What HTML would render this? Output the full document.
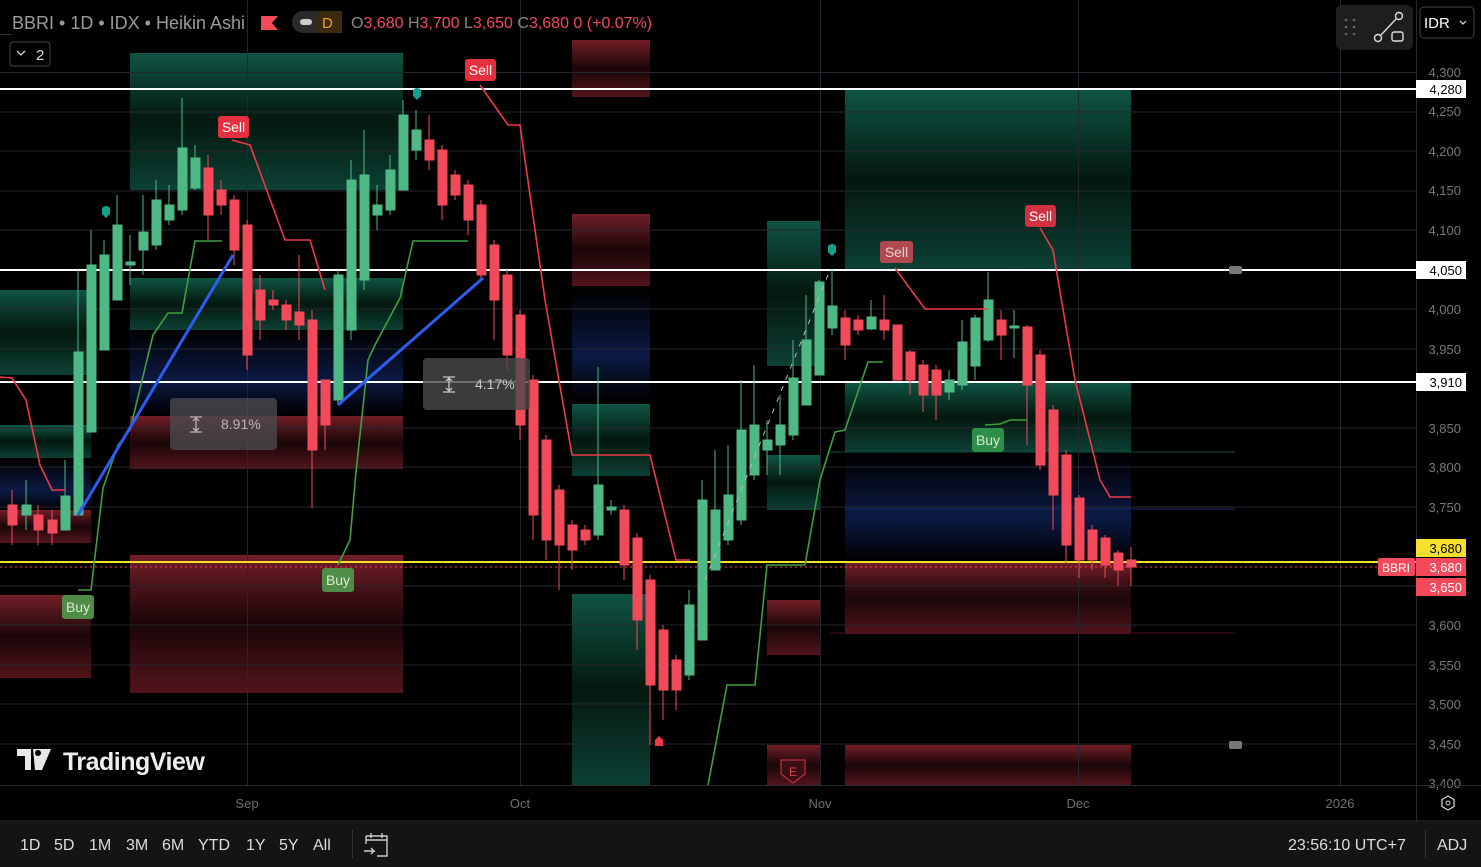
<!DOCTYPE html>
<html><head><meta charset="utf-8"><style>
html,body{margin:0;padding:0;background:#000;width:1481px;height:867px;overflow:hidden;font-family:"Liberation Sans",sans-serif}
</style></head><body>
<svg width="1481" height="867" style="position:absolute;left:0;top:0" xmlns="http://www.w3.org/2000/svg" font-family="Liberation Sans, sans-serif">
<defs>
<linearGradient id="gz" x1="0" y1="0" x2="0" y2="1"><stop offset="0" stop-color="#0f5444"/><stop offset="0.5" stop-color="#04180f"/><stop offset="1" stop-color="#0c4034"/></linearGradient>
<linearGradient id="rz" x1="0" y1="0" x2="0" y2="1"><stop offset="0" stop-color="#721e27"/><stop offset="0.5" stop-color="#1a0608"/><stop offset="1" stop-color="#52141b"/></linearGradient>
<linearGradient id="bz" x1="0" y1="0" x2="0" y2="1"><stop offset="0" stop-color="#000"/><stop offset="0.6" stop-color="#0c1a44"/><stop offset="1" stop-color="#000"/></linearGradient>
</defs>
<rect x="0" y="0" width="1481" height="867" fill="#000"/>
<rect x="130" y="53" width="273" height="137" fill="url(#gz)"/>
<rect x="130" y="278" width="273" height="52" fill="url(#gz)"/>
<rect x="130" y="330" width="273" height="85" fill="url(#bz)"/>
<rect x="130" y="416" width="273" height="53" fill="url(#rz)"/>
<rect x="130" y="555" width="273" height="138" fill="url(#rz)"/>
<rect x="0" y="290" width="91" height="85" fill="url(#gz)"/>
<rect x="0" y="425" width="91" height="33" fill="url(#gz)"/>
<rect x="0" y="460" width="91" height="50" fill="url(#bz)"/>
<rect x="0" y="510" width="91" height="33" fill="url(#rz)"/>
<rect x="0" y="595" width="91" height="83" fill="url(#rz)"/>
<rect x="572" y="40" width="78" height="57" fill="url(#rz)"/>
<rect x="572" y="214" width="78" height="72" fill="url(#rz)"/>
<rect x="572" y="290" width="78" height="110" fill="url(#bz)"/>
<rect x="572" y="404" width="78" height="72" fill="url(#gz)"/>
<rect x="572" y="594" width="78" height="191" fill="url(#gz)"/>
<rect x="767" y="221" width="53" height="145" fill="url(#gz)"/>
<rect x="767" y="455" width="53" height="55" fill="url(#gz)"/>
<rect x="767" y="600" width="53" height="55" fill="url(#rz)"/>
<rect x="845" y="90" width="286" height="180" fill="url(#gz)"/>
<rect x="845" y="382" width="286" height="70" fill="url(#gz)"/>
<rect x="845" y="455" width="286" height="105" fill="url(#bz)"/>
<rect x="845" y="562" width="286" height="72" fill="url(#rz)"/>
<rect x="845" y="745" width="286" height="40" fill="url(#rz)"/>
<rect x="767" y="745" width="53" height="40" fill="url(#rz)"/>
<line x1="830" y1="452" x2="1235" y2="452" stroke="#0b4a3c"/>
<line x1="830" y1="633" x2="1235" y2="633" stroke="#4a1218"/>
<line x1="845" y1="509" x2="1235" y2="509" stroke="#1a2c70"/>
<g stroke="#262630" stroke-width="1">
<line x1="0" y1="72.5" x2="1416" y2="72.5"/><line x1="0" y1="112" x2="1416" y2="112"/><line x1="0" y1="151" x2="1416" y2="151"/><line x1="0" y1="191" x2="1416" y2="191"/><line x1="0" y1="230" x2="1416" y2="230"/><line x1="0" y1="309" x2="1416" y2="309"/><line x1="0" y1="349" x2="1416" y2="349"/><line x1="0" y1="428" x2="1416" y2="428"/><line x1="0" y1="467" x2="1416" y2="467"/><line x1="0" y1="507" x2="1416" y2="507"/><line x1="0" y1="586" x2="1416" y2="586"/><line x1="0" y1="625" x2="1416" y2="625"/><line x1="0" y1="665" x2="1416" y2="665"/><line x1="0" y1="704" x2="1416" y2="704"/><line x1="0" y1="744" x2="1416" y2="744"/>
<line x1="247.5" y1="0" x2="247.5" y2="785"/><line x1="520.5" y1="0" x2="520.5" y2="785"/><line x1="820.5" y1="0" x2="820.5" y2="785"/><line x1="1078.5" y1="0" x2="1078.5" y2="785"/><line x1="1340.5" y1="0" x2="1340.5" y2="785"/>
</g>
<line x1="0" y1="89" x2="1416" y2="89" stroke="#fff" stroke-width="2"/>
<line x1="0" y1="270" x2="1416" y2="270" stroke="#fff" stroke-width="2"/>
<line x1="0" y1="382" x2="1416" y2="382" stroke="#fff" stroke-width="2"/>
<line x1="0" y1="562" x2="1416" y2="562" stroke="#f5e030" stroke-width="2"/>
<line x1="0" y1="567" x2="1416" y2="567" stroke="#f04050" stroke-width="1" stroke-dasharray="2 3"/>
<rect x="1229" y="266" width="13" height="8" rx="2" fill="#777"/>
<rect x="1229" y="741" width="13" height="8" rx="2" fill="#777"/>
<g fill="#f24a5a" stroke="#f24a5a" stroke-width="1">
<line x1="12" y1="490" x2="12" y2="545"/><rect x="8" y="505" width="9" height="20"/>
<line x1="38" y1="505" x2="38" y2="545"/><rect x="34" y="515" width="9" height="15"/>
<line x1="52" y1="510" x2="52" y2="545"/><rect x="48" y="520" width="9" height="13"/>
<line x1="208" y1="155" x2="208" y2="240"/><rect x="204" y="168" width="9" height="47"/>
<line x1="221" y1="180" x2="221" y2="215"/><rect x="217" y="190" width="9" height="15"/>
<line x1="234" y1="195" x2="234" y2="265"/><rect x="230" y="200" width="9" height="50"/>
<line x1="247" y1="220" x2="247" y2="370"/><rect x="243" y="225" width="9" height="130"/>
<line x1="260" y1="275" x2="260" y2="340"/><rect x="256" y="290" width="9" height="30"/>
<line x1="273" y1="290" x2="273" y2="310"/><rect x="269" y="300" width="9" height="5"/>
<line x1="286" y1="300" x2="286" y2="330"/><rect x="282" y="305" width="9" height="15"/>
<line x1="299" y1="255" x2="299" y2="340"/><rect x="295" y="312" width="9" height="13"/>
<line x1="312" y1="310" x2="312" y2="508"/><rect x="308" y="320" width="9" height="130"/>
<line x1="325" y1="380" x2="325" y2="450"/><rect x="321" y="380" width="9" height="45"/>
<line x1="429" y1="115" x2="429" y2="170"/><rect x="425" y="140" width="9" height="20"/>
<line x1="442" y1="145" x2="442" y2="220"/><rect x="438" y="150" width="9" height="55"/>
<line x1="455" y1="170" x2="455" y2="200"/><rect x="451" y="175" width="9" height="20"/>
<line x1="468" y1="180" x2="468" y2="235"/><rect x="464" y="185" width="9" height="35"/>
<line x1="481" y1="200" x2="481" y2="280"/><rect x="477" y="205" width="9" height="70"/>
<line x1="494" y1="240" x2="494" y2="340"/><rect x="490" y="245" width="9" height="55"/>
<line x1="507" y1="270" x2="507" y2="370"/><rect x="503" y="275" width="9" height="80"/>
<line x1="520" y1="310" x2="520" y2="440"/><rect x="516" y="315" width="9" height="110"/>
<line x1="533" y1="375" x2="533" y2="540"/><rect x="529" y="380" width="9" height="135"/>
<line x1="546" y1="435" x2="546" y2="560"/><rect x="542" y="440" width="9" height="100"/>
<line x1="559" y1="485" x2="559" y2="590"/><rect x="555" y="490" width="9" height="55"/>
<line x1="572" y1="520" x2="572" y2="570"/><rect x="568" y="525" width="9" height="25"/>
<line x1="585" y1="525" x2="585" y2="545"/><rect x="581" y="530" width="9" height="10"/>
<line x1="624" y1="505" x2="624" y2="580"/><rect x="620" y="510" width="9" height="55"/>
<line x1="637" y1="533" x2="637" y2="650"/><rect x="633" y="538" width="9" height="82"/>
<line x1="650" y1="575" x2="650" y2="745"/><rect x="646" y="580" width="9" height="105"/>
<line x1="663" y1="625" x2="663" y2="720"/><rect x="659" y="630" width="9" height="60"/>
<line x1="676" y1="655" x2="676" y2="710"/><rect x="672" y="660" width="9" height="30"/>
<line x1="845" y1="310" x2="845" y2="360"/><rect x="841" y="318" width="9" height="27"/>
<line x1="858" y1="315" x2="858" y2="335"/><rect x="854" y="320" width="9" height="10"/>
<line x1="884" y1="295" x2="884" y2="340"/><rect x="880" y="320" width="9" height="10"/>
<line x1="897" y1="325" x2="897" y2="380"/><rect x="893" y="325" width="9" height="55"/>
<line x1="910" y1="350" x2="910" y2="395"/><rect x="906" y="352" width="9" height="28"/>
<line x1="923" y1="360" x2="923" y2="412"/><rect x="919" y="365" width="9" height="30"/>
<line x1="936" y1="365" x2="936" y2="420"/><rect x="932" y="370" width="9" height="25"/>
<line x1="1001" y1="310" x2="1001" y2="360"/><rect x="997" y="320" width="9" height="15"/>
<line x1="1027" y1="325" x2="1027" y2="445"/><rect x="1023" y="327" width="9" height="58"/>
<line x1="1040" y1="350" x2="1040" y2="470"/><rect x="1036" y="355" width="9" height="110"/>
<line x1="1053" y1="405" x2="1053" y2="530"/><rect x="1049" y="410" width="9" height="85"/>
<line x1="1066" y1="450" x2="1066" y2="563"/><rect x="1062" y="455" width="9" height="90"/>
<line x1="1079" y1="495" x2="1079" y2="578"/><rect x="1075" y="498" width="9" height="62"/>
<line x1="1092" y1="525" x2="1092" y2="570"/><rect x="1088" y="530" width="9" height="30"/>
<line x1="1105" y1="535" x2="1105" y2="578"/><rect x="1101" y="538" width="9" height="27"/>
<line x1="1118" y1="550" x2="1118" y2="586"/><rect x="1114" y="553" width="9" height="17"/>
<line x1="1131" y1="547" x2="1131" y2="586"/><rect x="1127" y="560" width="9" height="7"/>
</g>
<g fill="#4fb985" stroke="#4fb985" stroke-width="1">
<line x1="26" y1="480" x2="26" y2="530"/><rect x="22" y="505" width="9" height="10"/>
<line x1="65" y1="460" x2="65" y2="530"/><rect x="61" y="496" width="9" height="34"/>
<line x1="78" y1="270" x2="78" y2="515"/><rect x="74" y="352" width="9" height="163"/>
<line x1="91" y1="230" x2="91" y2="432"/><rect x="87" y="265" width="9" height="167"/>
<line x1="104" y1="240" x2="104" y2="350"/><rect x="100" y="255" width="9" height="95"/>
<line x1="117" y1="195" x2="117" y2="300"/><rect x="113" y="225" width="9" height="75"/>
<line x1="130" y1="235" x2="130" y2="285"/><rect x="126" y="262" width="9" height="3"/>
<line x1="143" y1="195" x2="143" y2="275"/><rect x="139" y="232" width="9" height="18"/>
<line x1="156" y1="180" x2="156" y2="250"/><rect x="152" y="200" width="9" height="45"/>
<line x1="169" y1="185" x2="169" y2="225"/><rect x="165" y="205" width="9" height="15"/>
<line x1="182" y1="98" x2="182" y2="215"/><rect x="178" y="148" width="9" height="62"/>
<line x1="195" y1="145" x2="195" y2="190"/><rect x="191" y="158" width="9" height="30"/>
<line x1="338" y1="270" x2="338" y2="405"/><rect x="334" y="275" width="9" height="125"/>
<line x1="351" y1="160" x2="351" y2="340"/><rect x="347" y="180" width="9" height="150"/>
<line x1="364" y1="130" x2="364" y2="290"/><rect x="360" y="175" width="9" height="105"/>
<line x1="377" y1="185" x2="377" y2="230"/><rect x="373" y="205" width="9" height="10"/>
<line x1="390" y1="155" x2="390" y2="215"/><rect x="386" y="170" width="9" height="40"/>
<line x1="403" y1="100" x2="403" y2="190"/><rect x="399" y="115" width="9" height="75"/>
<line x1="416" y1="110" x2="416" y2="160"/><rect x="412" y="130" width="9" height="20"/>
<line x1="598" y1="367" x2="598" y2="540"/><rect x="594" y="485" width="9" height="50"/>
<line x1="611" y1="500" x2="611" y2="515"/><rect x="607" y="507" width="9" height="3"/>
<line x1="689" y1="590" x2="689" y2="680"/><rect x="685" y="605" width="9" height="70"/>
<line x1="702" y1="480" x2="702" y2="640"/><rect x="698" y="500" width="9" height="140"/>
<line x1="715" y1="450" x2="715" y2="570"/><rect x="711" y="510" width="9" height="60"/>
<line x1="728" y1="445" x2="728" y2="545"/><rect x="724" y="495" width="9" height="45"/>
<line x1="741" y1="380" x2="741" y2="525"/><rect x="737" y="430" width="9" height="90"/>
<line x1="754" y1="365" x2="754" y2="480"/><rect x="750" y="425" width="9" height="50"/>
<line x1="767" y1="420" x2="767" y2="475"/><rect x="763" y="440" width="9" height="10"/>
<line x1="780" y1="395" x2="780" y2="475"/><rect x="776" y="425" width="9" height="20"/>
<line x1="793" y1="340" x2="793" y2="440"/><rect x="789" y="378" width="9" height="57"/>
<line x1="806" y1="295" x2="806" y2="405"/><rect x="802" y="340" width="9" height="65"/>
<line x1="819" y1="280" x2="819" y2="375"/><rect x="815" y="282" width="9" height="93"/>
<line x1="832" y1="270" x2="832" y2="335"/><rect x="828" y="306" width="9" height="22"/>
<line x1="871" y1="300" x2="871" y2="330"/><rect x="867" y="317" width="9" height="12"/>
<line x1="949" y1="370" x2="949" y2="400"/><rect x="945" y="380" width="9" height="12"/>
<line x1="962" y1="320" x2="962" y2="390"/><rect x="958" y="342" width="9" height="43"/>
<line x1="975" y1="315" x2="975" y2="380"/><rect x="971" y="318" width="9" height="48"/>
<line x1="988" y1="272" x2="988" y2="342"/><rect x="984" y="300" width="9" height="40"/>
<line x1="1014" y1="310" x2="1014" y2="358"/><rect x="1010" y="326" width="9" height="2"/>
</g>
<line x1="705" y1="580" x2="830" y2="270" stroke="#bbb" stroke-width="1" stroke-dasharray="5 7"/>
<g fill="none" stroke="#f03848" stroke-width="1.6">
<path d="M0,377 L12,378 L26,400 L40,465 L52,490 L65,490"/>
<path d="M232,140 L250,145 L285,240 L310,240 L325,290"/>
<path d="M480,85 L508,125 L520,125 L545,300 L572,455 L650,455 L676,560 L690,560"/>
<path d="M895,268 L925,309 L988,309"/>
<path d="M1040,228 L1053,250 L1075,380 L1100,480 L1110,497 L1131,497"/>
</g>
<g fill="none" stroke="#3ea040" stroke-width="1.6">
<path d="M78,590 L91,590 L103,488 L118,445 L130,430 L153,335 L168,313 L182,313 L195,241 L222,241"/>
<path d="M338,565 L350,540 L356,472 L368,360 L375,345 L400,298 L413,241 L468,241"/>
<path d="M708,785 L727,685 L755,685 L767,565 L805,565 L820,480 L835,432 L845,430 L868,362 L883,362"/>
<path d="M985,425 L1000,424 L1010,420 L1027,420"/>
</g>
<line x1="78" y1="515" x2="233" y2="255" stroke="#2e5cf0" stroke-width="3"/>
<line x1="338" y1="405" x2="483" y2="278" stroke="#2e5cf0" stroke-width="3"/>
<path d="M102,208 q4,-4 8,0 v6 l-4,4 l-4,-4z" fill="#14a08a"/>
<path d="M413,90 q4,-4 8,0 v6 l-4,4 l-4,-4z" fill="#14a08a"/>
<path d="M828,246 q4,-4 8,0 v6 l-4,4 l-4,-4z" fill="#14a08a"/>
<path d="M655,740 l4,-4 l4,4 v6 h-8z" fill="#f03848"/>
<rect x="218" y="116" width="31" height="22" rx="3" fill="#e53040"/><text x="233.5" y="132" fill="#fff" font-size="14" text-anchor="middle">Sell</text>
<rect x="465" y="59" width="31" height="22" rx="3" fill="#e53040"/><text x="480.5" y="75" fill="#fff" font-size="14" text-anchor="middle">Sell</text>
<rect x="880" y="241" width="33" height="22" rx="3" fill="#b04850"/><text x="896.5" y="257" fill="#e8d0d0" font-size="14" text-anchor="middle">Sell</text>
<rect x="1025" y="205" width="31" height="22" rx="3" fill="#d03040"/><text x="1040.5" y="221" fill="#fff" font-size="14" text-anchor="middle">Sell</text>
<rect x="62" y="595" width="32" height="24" rx="3" fill="#4e8c48"/><text x="78" y="612" fill="#e0e8d0" font-size="14" text-anchor="middle">Buy</text>
<rect x="322" y="568" width="32" height="24" rx="3" fill="#4e8c48"/><text x="338" y="585" fill="#e0e8d0" font-size="14" text-anchor="middle">Buy</text>
<rect x="972" y="428" width="32" height="24" rx="3" fill="#2e9048"/><text x="988" y="445" fill="#e0e8d0" font-size="14" text-anchor="middle">Buy</text>
<rect x="170" y="398" width="107" height="52" rx="4" fill="#4a4a4e" fill-opacity="0.8"/>
<text x="221" y="429" fill="#c8b0b0" font-size="14">8.91%</text>
<path d="M190,417 h12 M190,432 h12 M196,418 v13 M193,421 l3,-3 l3,3 M193,428 l3,3 l3,-3" stroke="#c8b0b0" fill="none" stroke-width="1.3"/>
<rect x="423" y="358" width="107" height="52" rx="4" fill="#4a4a4e" fill-opacity="0.8"/>
<text x="475" y="389" fill="#c8c8c8" font-size="14">4.17%</text>
<path d="M443,377 h12 M443,392 h12 M449,378 v13 M446,381 l3,-3 l3,3 M446,388 l3,3 l3,-3" stroke="#c8c8c8" fill="none" stroke-width="1.3"/>
<path d="M781,760 h24 v14 l-12,9 l-12,-9z" fill="#3a1015" stroke="#c03040" stroke-width="1.2"/>
<text x="793" y="776" fill="#e04050" font-size="12" text-anchor="middle">E</text>
<rect x="1416" y="0" width="65" height="785" fill="#000"/>
<line x1="1416.5" y1="0" x2="1416.5" y2="867" stroke="#2a2a2a"/>
<g fill="#787878" font-size="13" text-anchor="end">
<text x="1461" y="77">4,300</text><text x="1461" y="116">4,250</text><text x="1461" y="156">4,200</text><text x="1461" y="195">4,150</text><text x="1461" y="235">4,100</text><text x="1461" y="314">4,000</text><text x="1461" y="354">3,950</text><text x="1461" y="433">3,850</text><text x="1461" y="472">3,800</text><text x="1461" y="512">3,750</text><text x="1461" y="630">3,600</text><text x="1461" y="670">3,550</text><text x="1461" y="709">3,500</text><text x="1461" y="749">3,450</text><text x="1461" y="788">3,400</text>
</g>
<rect x="1416" y="80" width="50" height="18" fill="#fff"/><text x="1462" y="94" fill="#000" font-size="13" text-anchor="end">4,280</text>
<rect x="1416" y="261" width="50" height="18" fill="#fff"/><text x="1462" y="275" fill="#000" font-size="13" text-anchor="end">4,050</text>
<rect x="1416" y="373" width="50" height="18" fill="#fff"/><text x="1462" y="387" fill="#000" font-size="13" text-anchor="end">3,910</text>
<rect x="1416" y="539" width="50" height="18" fill="#f5e030"/><text x="1462" y="553" fill="#000" font-size="13" text-anchor="end">3,680</text>
<rect x="1416" y="558" width="50" height="18" fill="#f24a5a"/><text x="1462" y="572" fill="#fff" font-size="13" text-anchor="end">3,680</text>
<rect x="1416" y="578" width="50" height="18" fill="#f24a5a"/><text x="1462" y="592" fill="#fff" font-size="13" text-anchor="end">3,650</text>
<rect x="1378" y="558" width="37" height="18" rx="2" fill="#f24a5a"/><text x="1396" y="572" fill="#fff" font-size="12" text-anchor="middle">BBRI</text>
<rect x="0" y="785" width="1416" height="36" fill="#000"/>
<line x1="0" y1="785.5" x2="1481" y2="785.5" stroke="#2a2a2a"/>
<g fill="#6e6e6e" font-size="13" text-anchor="middle">
<text x="247" y="808">Sep</text><text x="520" y="808">Oct</text><text x="820" y="808">Nov</text><text x="1078" y="808">Dec</text><text x="1340" y="808">2026</text>
</g>
<path d="M1448,796 l6,3.5 v7 l-6,3.5 l-6,-3.5 v-7z" fill="none" stroke="#ccc" stroke-width="1.3"/><circle cx="1448" cy="803" r="2" fill="none" stroke="#ccc"/>
<rect x="0" y="821" width="1481" height="46" fill="#141414"/>
<line x1="0" y1="821" x2="1481" y2="821" stroke="#2a2a2a"/>
<line x1="352.5" y1="830" x2="352.5" y2="858" stroke="#333"/>
<line x1="1425.5" y1="830" x2="1425.5" y2="858" stroke="#333"/>
<g fill="#ddd" font-size="16">
<text x="20" y="850">1D</text><text x="54" y="850">5D</text><text x="89" y="850">1M</text><text x="126" y="850">3M</text><text x="162" y="850">6M</text><text x="198" y="850">YTD</text><text x="246" y="850">1Y</text><text x="279" y="850">5Y</text><text x="313" y="850">All</text>
<text x="1288" y="850">23:56:10 UTC+7</text><text x="1437" y="850">ADJ</text>
</g>
<path d="M366,836 h21 v20 h-10 M366,836 v8 M371,833 v5 M382,833 v5 M366,840 h21 M364,851 h10 l-3,-3 M374,851 l-3,3" stroke="#ccc" fill="none" stroke-width="1.4"/>
<text x="12" y="29" fill="#9a9a9a" font-size="18">BBRI • 1D • IDX • Heikin Ashi</text>
<path d="M261,16 h17 l-6,7 l6,7 h-17z" fill="#f24a5a"/>
<rect x="292" y="11" width="50" height="22" rx="11" fill="#2a2a2a"/>
<rect x="318" y="11" width="24" height="22" fill="#3a2a10"/><rect x="330" y="11" width="12" height="22" rx="11" fill="#3a2a10"/>
<rect x="300" y="19" width="12" height="6" rx="3" fill="#ccc"/>
<text x="322" y="28" fill="#f0a020" font-size="15">D</text>
<text x="351" y="28" font-size="16" fill="#f24a5a"><tspan fill="#888">O</tspan>3,680 <tspan fill="#888">H</tspan>3,700 <tspan fill="#888">L</tspan>3,650 <tspan fill="#888">C</tspan>3,680 0 (+0.07%)</text>
<rect x="10" y="42" width="40" height="24" rx="3" fill="#000" stroke="#444"/>
<path d="M17,51 l4,4 l4,-4" stroke="#ccc" fill="none" stroke-width="1.3"/>
<text x="36" y="60" fill="#ddd" font-size="15">2</text>
<path d="M17,749 h14 v21 h-6 v-14 h-8z M33,749 h18 l-9,21 h-7z" fill="#e8e8e8"/>
<circle cx="38" cy="753" r="3" fill="#000"/>
<text x="63" y="770" fill="#eee" font-size="25" font-weight="bold" letter-spacing="-0.5">TradingView</text>
<rect x="1336" y="5" width="77" height="45" rx="6" fill="#1e1e1e"/>
<g fill="#666"><circle cx="1346" cy="20" r="1.3"/><circle cx="1354" cy="20" r="1.3"/><circle cx="1346" cy="27" r="1.3"/><circle cx="1354" cy="27" r="1.3"/><circle cx="1346" cy="34" r="1.3"/><circle cx="1354" cy="34" r="1.3"/></g>
<circle cx="1378" cy="38" r="3.5" fill="none" stroke="#ddd" stroke-width="1.4"/><circle cx="1399" cy="16" r="3.5" fill="none" stroke="#ddd" stroke-width="1.4"/>
<line x1="1381" y1="35" x2="1396" y2="19" stroke="#ddd" stroke-width="1.4"/>
<rect x="1392" y="32" width="11" height="9" rx="2" fill="none" stroke="#ddd" stroke-width="1.4"/>
<rect x="1420" y="7" width="54" height="31" rx="4" fill="#000" stroke="#444"/>
<text x="1424" y="28" fill="#fff" font-size="15">IDR</text>
<path d="M1460,21 l3,3 l3,-3" stroke="#ccc" fill="none" stroke-width="1.3"/>
<line x1="0" y1="34.5" x2="12" y2="34.5" stroke="#333"/>
</svg>
</body></html>
